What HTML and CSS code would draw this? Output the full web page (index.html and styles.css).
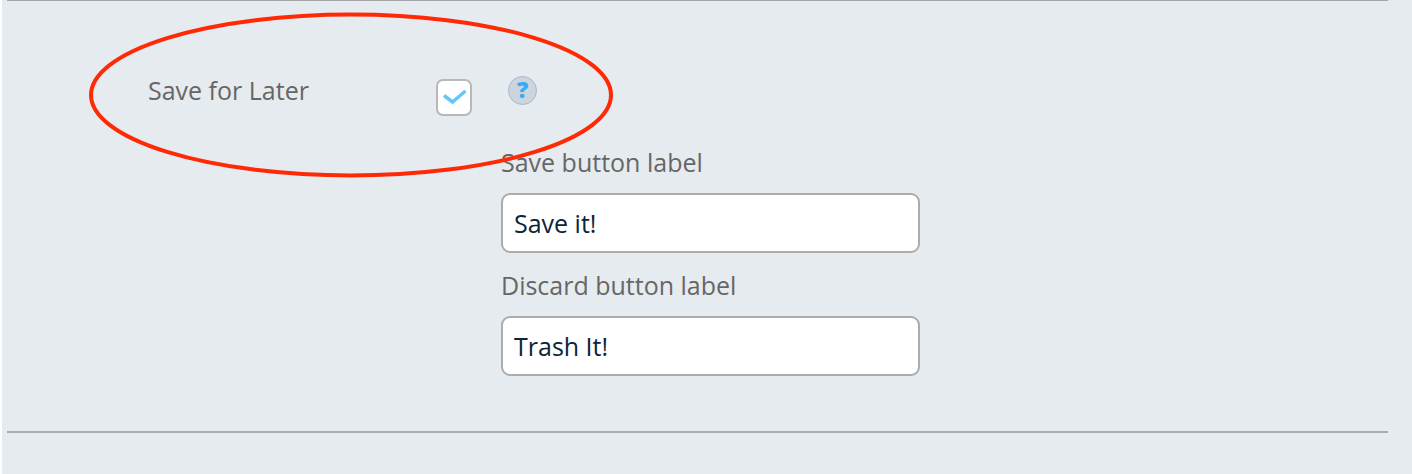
FILE: index.html
```html
<!DOCTYPE html>
<html lang="en">
<head>
<meta charset="utf-8">
<title>Save for Later settings</title>
<link rel="stylesheet" href="styles.css">
</head>
<body>
<form class="page">
  <section class="settings">
    <div class="option">
      <label class="option-label" for="save-later">Save for Later</label>
      <span class="check">
        <input class="check-box" type="checkbox" id="save-later" checked>
        <svg class="check-mark" viewBox="0 0 36 36" aria-hidden="true"><path d="M8 16 16.500 22.500 29.500 11.500"/></svg>
      </span>
      <button class="help" type="button" aria-label="Help">?</button>
    </div>
    <div class="fields">
      <div class="field">
        <label class="field-label" for="save-label">Save button label</label>
        <input class="field-input" type="text" id="save-label" value="Save it!">
      </div>
      <div class="field">
        <label class="field-label" for="discard-label">Discard button label</label>
        <input class="field-input" type="text" id="discard-label" value="Trash It!">
      </div>
    </div>
    <svg class="highlight" viewBox="0 0 524 166" aria-hidden="true"><ellipse cx="262" cy="83" rx="260" ry="80.500"/></svg>
  </section>
</form>
</body>
</html>
```
FILE: styles.css
```css
* {
  box-sizing: border-box;
}

body {
  margin: 0;
  background: #fff;
  font-family: "Open Sans", "Noto Sans", sans-serif;
  font-size: 25px;
  line-height: 34px;
  color: #666;
}

.page {
  min-height: 100vh;
  margin-left: 2px;
  padding: 0 24px 0 5px;
  background: #e6ebef;
}

.settings {
  position: relative;
  padding: 72px 0 55px 141px;
  border-top: 1px solid #a4a5a6;
  border-bottom: 2px solid #a9acae;
}

.option {
  display: flex;
  align-items: flex-start;
}

.option-label {
  width: 288px;
}

.check {
  display: grid;
  width: 36px;
  height: 37px;
  margin-top: 6px;
}

.check-box,
.check-mark {
  grid-area: 1 / 1;
  width: 100%;
  height: 100%;
  margin: 0;
}

.check-box {
  appearance: none;
  background: #fff;
  border: 2px solid #b8b8b8;
  border-radius: 7px;
}

.check-mark {
  pointer-events: none;
  fill: none;
  stroke: #66c6fa;
  stroke-width: 3.5;
}

.help {
  width: 29px;
  height: 29px;
  margin: 3px 0 0 36px;
  padding: 0 0 3px;
  border: 1px solid #a9b7c6;
  border-radius: 50%;
  background: #ccd5dd;
  color: #38aaf8;
  font-family: inherit;
  font-size: 23px;
  font-weight: 800;
  line-height: 24px;
}

.fields {
  display: grid;
  gap: 15px;
  width: 419px;
  margin: 29px 0 0 353px;
}

.field {
  display: grid;
  gap: 14px;
}

.field-input {
  width: 100%;
  height: 60px;
  padding: 0 11px;
  border: 2px solid #acacac;
  border-radius: 9px;
  background: #fff;
  color: #0b2438;
  font: inherit;
}

.highlight {
  position: absolute;
  top: 11px;
  left: 82px;
  width: 524px;
  height: 166px;
  pointer-events: none;
  fill: none;
  stroke: #ff2a05;
  stroke-width: 4;
}
```
